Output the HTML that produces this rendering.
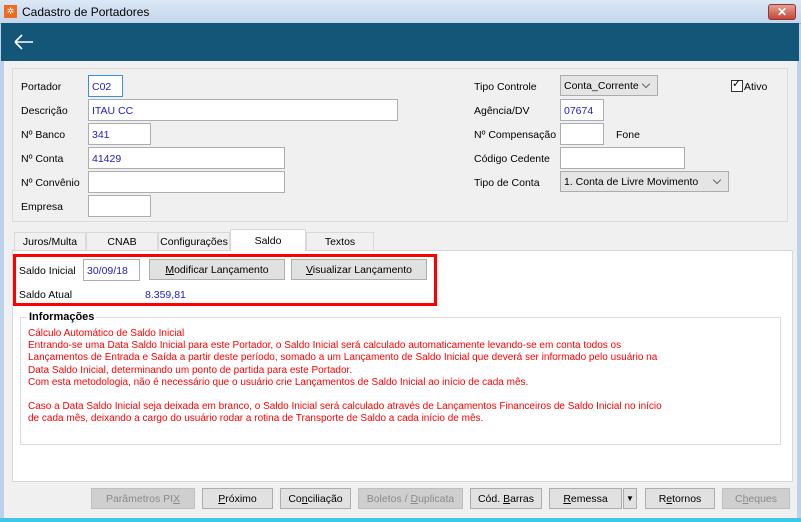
<!DOCTYPE html>
<html><head><meta charset="utf-8"><style>
*{box-sizing:border-box;margin:0;padding:0}
body{width:801px;height:522px;overflow:hidden;background:#f0f0f0;font-family:"Liberation Sans",sans-serif;font-size:10.5px;color:#000;position:relative}
.a{position:absolute;white-space:nowrap}
.in{position:absolute;background:#fff;border:1px solid #abadb3;color:#2020c0;padding:5px 0 0 3px;height:22px}
.sel{position:absolute;background:#e5e5e5;border:1px solid #acacac;padding:4px 0 0 3px;height:21px}
.sel:after{content:"";position:absolute;right:8px;top:5px;width:5px;height:5px;border-right:1px solid #666;border-bottom:1px solid #666;transform:rotate(45deg)}
.btn{position:absolute;background:#e1e1e1;border:1px solid #adadad;text-align:center;padding-top:4px;height:21px}
.dis{color:#8a8a8a;background:#cfcfcf;border-color:#bfbfbf}
.tab{position:absolute;top:232px;height:18px;background:#f0f0f0;border:1px solid #d9d9d9;border-bottom:none;text-align:center;padding-top:3px}
.red{color:#f00}
</style></head><body>
<div class="a" style="left:0;top:0;width:801px;height:24px;background:linear-gradient(#dbe8f6,#c3d6ec);border-bottom:1px solid #aab"></div>
<div class="a" style="left:4px;top:5px;width:13px;height:13px;background:#f06a20;color:#fff;font-size:9px;text-align:center;line-height:13px">✲</div>
<div class="a" style="left:22px;top:5px;font-size:12px">Cadastro de Portadores</div>
<div class="a" style="left:768px;top:4px;width:28px;height:16px;background:linear-gradient(#e6a090,#c4473a);border:1px solid #8a3a30;border-radius:3px;color:#fff;text-align:center;font-weight:bold;font-size:12px;line-height:14px">✕</div>
<div class="a" style="left:0;top:24px;width:4px;height:498px;background:#bcd2ea"></div>
<div class="a" style="left:797px;top:24px;width:4px;height:498px;background:#bcd2ea"></div>
<div class="a" style="left:0;top:518px;width:801px;height:4px;background:#3ec8e8"></div>
<div class="a" style="left:1px;top:23px;width:798px;height:38px;background:#145677"></div>
<svg class="a" style="left:13px;top:33px" width="22" height="18"><path d="M2 9H20M2 9L9 2M2 9L9 16" stroke="#fff" stroke-width="1.6" fill="none"/></svg>

<div class="a" style="left:12px;top:68px;width:776px;height:154px;border:1px solid #dcdcdc;background:#f0f0f0"></div>
<div class="a" style="left:21px;top:81px">Portador</div>
<div class="in" style="left:88px;top:75px;width:35px;border-color:#3c8fd9">C02</div>
<div class="a" style="left:21px;top:105px">Descrição</div>
<div class="in" style="left:88px;top:99px;width:310px">ITAU CC</div>
<div class="a" style="left:21px;top:129px">Nº Banco</div>
<div class="in" style="left:88px;top:123px;width:63px">341</div>
<div class="a" style="left:21px;top:153px">Nº Conta</div>
<div class="in" style="left:88px;top:147px;width:197px">41429</div>
<div class="a" style="left:21px;top:177px">Nº Convênio</div>
<div class="in" style="left:88px;top:171px;width:197px"></div>
<div class="a" style="left:21px;top:201px">Empresa</div>
<div class="in" style="left:88px;top:195px;width:63px"></div>

<div class="a" style="left:474px;top:81px">Tipo Controle</div>
<div class="sel" style="left:560px;top:75px;width:98px">Conta_Corrente</div>
<div class="a" style="left:731px;top:80px;width:12px;height:12px;border:1px solid #333;background:#fff"></div>
<div class="a" style="left:732px;top:77px;font-size:11px">✓</div>
<div class="a" style="left:744px;top:81px">Ativo</div>
<div class="a" style="left:474px;top:105px">Agência/DV</div>
<div class="in" style="left:560px;top:99px;width:44px">07674</div>
<div class="a" style="left:474px;top:129px">Nº Compensação</div>
<div class="in" style="left:560px;top:123px;width:44px"></div>
<div class="a" style="left:616px;top:129px">Fone</div>
<div class="a" style="left:474px;top:153px">Código Cedente</div>
<div class="in" style="left:560px;top:147px;width:125px"></div>
<div class="a" style="left:474px;top:177px">Tipo de Conta</div>
<div class="sel" style="left:560px;top:171px;width:169px">1. Conta de Livre Movimento</div>

<div class="a" style="left:12px;top:250px;width:781px;height:232px;border:1px solid #d9d9d9;background:#fff"></div>
<div class="tab" style="left:14px;width:72px">Juros/Multa</div>
<div class="tab" style="left:86px;width:72px">CNAB</div>
<div class="tab" style="left:158px;width:72px">Configurações</div>
<div class="tab" style="left:230px;top:229px;width:76px;height:22px;background:#fff;padding-top:5px">Saldo</div>
<div class="tab" style="left:306px;width:68px">Textos</div>

<div class="a" style="left:13px;top:254px;width:424px;height:52px;border:3px solid #f00"></div>
<div class="a" style="left:19px;top:265px">Saldo Inicial</div>
<div class="in" style="left:83px;top:259px;width:57px">30/09/18</div>
<div class="btn" style="left:149px;top:259px;width:136px"><u>M</u>odificar Lançamento</div>
<div class="btn" style="left:291px;top:259px;width:136px"><u>V</u>isualizar Lançamento</div>
<div class="a" style="left:19px;top:289px">Saldo Atual</div>
<div class="a" style="left:145px;top:289px;color:#2020c0">8.359,81</div>

<div class="a" style="left:20px;top:317px;width:761px;height:128px;border:1px solid #dcdcdc"></div>
<div class="a" style="left:27px;top:311px;background:#fff;font-weight:bold;padding:0 2px;font-size:11px">Informações</div>
<div class="a red" style="left:28px;top:328px;line-height:12.2px;font-size:10px">Cálculo Automático de Saldo Inicial<br>Entrando-se uma Data Saldo Inicial para este Portador, o Saldo Inicial será calculado automaticamente levando-se em conta todos os<br>Lançamentos de Entrada e Saída a partir deste período, somado a um Lançamento de Saldo Inicial que deverá ser informado pelo usuário na<br>Data Saldo Inicial, determinando um ponto de partida para este Portador.<br>Com esta metodologia, não é necessário que o usuário crie Lançamentos de Saldo Inicial ao início de cada mês.<br><br>Caso a Data Saldo Inicial seja deixada em branco, o Saldo Inicial será calculado através de Lançamentos Financeiros de Saldo Inicial no início<br>de cada mês, deixando a cargo do usuário rodar a rotina de Transporte de Saldo a cada início de mês.</div>

<div class="btn dis" style="left:91px;top:488px;width:104px">Parâmetros PI<u>X</u></div>
<div class="btn" style="left:202px;top:488px;width:71px"><u>P</u>róximo</div>
<div class="btn" style="left:280px;top:488px;width:71px">Co<u>n</u>ciliação</div>
<div class="btn dis" style="left:358px;top:488px;width:105px">Boletos / <u>D</u>uplicata</div>
<div class="btn" style="left:470px;top:488px;width:72px">Cód. <u>B</u>arras</div>
<div class="btn" style="left:549px;top:488px;width:73px"><u>R</u>emessa</div>
<div class="btn" style="left:623px;top:488px;width:14px;font-size:8px;padding-top:5px">▼</div>
<div class="btn" style="left:645px;top:488px;width:70px">R<u>e</u>tornos</div>
<div class="btn dis" style="left:722px;top:488px;width:68px">C<u>h</u>eques</div>
</body></html>
